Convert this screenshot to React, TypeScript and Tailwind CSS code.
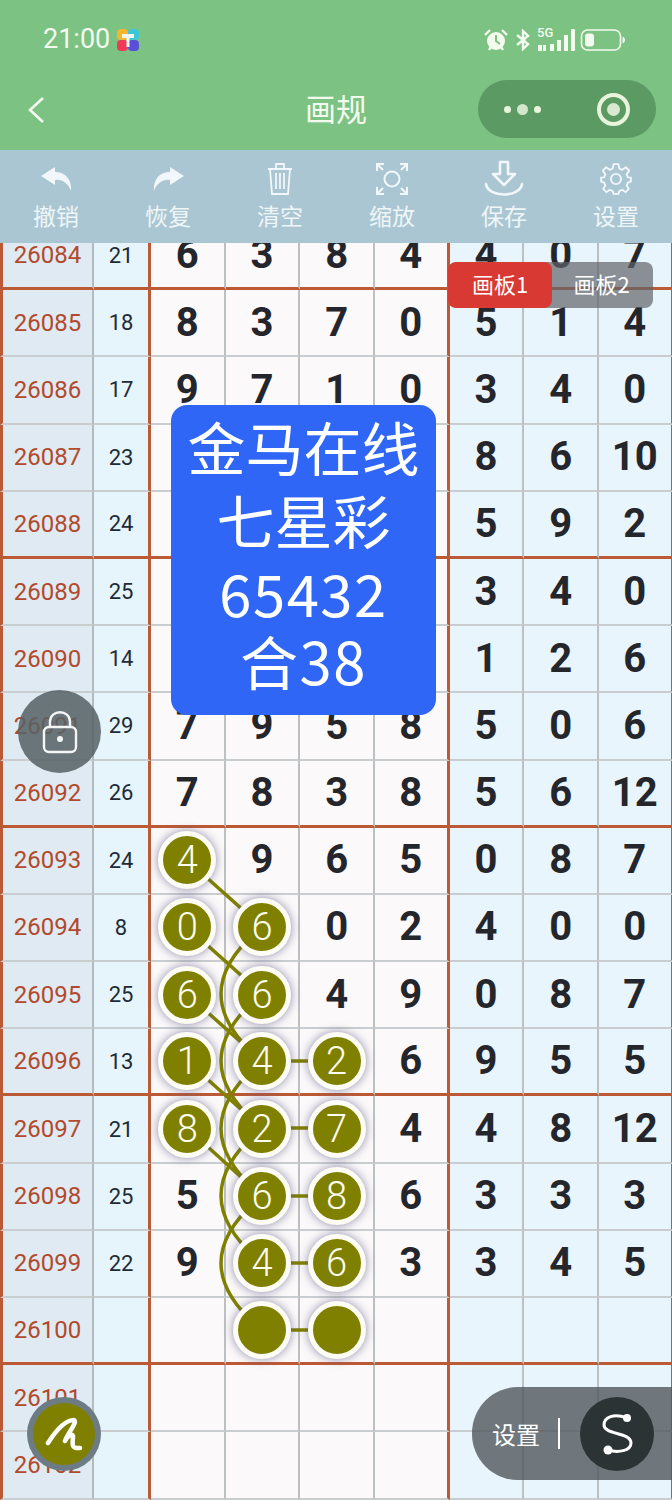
import React from 'react';

type Cell = number | string | null;
type Row = { id: number; sum: number | null; nums: Cell[]; lit?: number[] };

const rows: Row[] = [
  { id: 26084, sum: 21, nums: [6, 3, 8, 4, 4, 0, 7] },
  { id: 26085, sum: 18, nums: [8, 3, 7, 0, 5, 1, 4] },
  { id: 26086, sum: 17, nums: [9, 7, 1, 0, 3, 4, 0] },
  { id: 26087, sum: 23, nums: [null, null, null, null, 8, 6, 10] },
  { id: 26088, sum: 24, nums: [null, null, null, null, 5, 9, 2] },
  { id: 26089, sum: 25, nums: [null, null, null, null, 3, 4, 0] },
  { id: 26090, sum: 14, nums: [null, null, null, null, 1, 2, 6] },
  { id: 26091, sum: 29, nums: [7, 9, 5, 8, 5, 0, 6] },
  { id: 26092, sum: 26, nums: [7, 8, 3, 8, 5, 6, 12] },
  { id: 26093, sum: 24, nums: [4, 9, 6, 5, 0, 8, 7], lit: [0] },
  { id: 26094, sum: 8, nums: [0, 6, 0, 2, 4, 0, 0], lit: [0, 1] },
  { id: 26095, sum: 25, nums: [6, 6, 4, 9, 0, 8, 7], lit: [0, 1] },
  { id: 26096, sum: 13, nums: [1, 4, 2, 6, 9, 5, 5], lit: [0, 1, 2] },
  { id: 26097, sum: 21, nums: [8, 2, 7, 4, 4, 8, 12], lit: [0, 1, 2] },
  { id: 26098, sum: 25, nums: [5, 6, 8, 6, 3, 3, 3], lit: [1, 2] },
  { id: 26099, sum: 22, nums: [9, 4, 6, 3, 3, 4, 5], lit: [1, 2] },
  { id: 26100, sum: null, nums: [null, null, null, null, null, null, null], lit: [1, 2] },
  { id: 26101, sum: null, nums: [null, null, null, null, null, null, null] },
  { id: 26102, sum: null, nums: [null, null, null, null, null, null, null] },
];

const tools = ['撤销', '恢复', '清空', '缩放', '保存', '设置'];

const ToolIcon = ({ index }: { index: number }) => {
  const c = '#f1f7fa';
  if (index === 0 || index === 1) {
    return (
      <svg width="33" height="26" viewBox="0 0 33 26" className={index === 1 ? '-scale-x-100' : ''}>
        <path d="M15 1 L1 10 L15 19 L15 14 C22 13 28 17 31 25 C32 14 26 6 15 6 Z" fill={c} />
      </svg>
    );
  }
  if (index === 2) {
    return (
      <svg width="30" height="34" viewBox="0 0 30 34" fill="none" stroke={c} strokeWidth="1.8">
        <path d="M3 7 H27 M11 7 V2 H19 V7 M5 7 L7 32 H23 L25 7 M11 11 V27 M15 11 V27 M19 11 V27" />
      </svg>
    );
  }
  if (index === 3) {
    return (
      <svg width="34" height="34" viewBox="0 0 34 34" fill="none" stroke={c} strokeWidth="2">
        <circle cx="17" cy="17" r="7.5" />
        <path d="M2 9 V2 H9 M2 2 L8 8 M25 2 H32 V9 M32 2 L26 8 M2 25 V32 H9 M2 32 L8 26 M25 32 H32 V25 M32 32 L26 26" />
      </svg>
    );
  }
  if (index === 4) {
    return (
      <svg width="40" height="38" viewBox="0 0 40 38" fill="none" stroke={c} strokeWidth="2.6" strokeLinejoin="round">
        <path d="M16 2 H24 V14 H31 L20 25 L9 14 H16 Z" />
        <path d="M2 24 C4 38 36 38 38 24" strokeLinecap="round" />
      </svg>
    );
  }
  return (
    <svg width="34" height="34" viewBox="0 0 24 24" fill="none" stroke={c} strokeWidth="1.3" strokeLinejoin="round">
      <circle cx="12" cy="12" r="3.6" />
      <path d="M10.3 1.5 H13.7 L14.3 4.6 L16.4 5.5 L19 3.7 L21.3 6.1 L19.5 8.7 L20.4 10.8 L22.5 11 V13.9 L20.4 14.5 L19.5 16.6 L21 19 L18.8 21.3 L16.4 19.6 L14.3 20.5 L13.7 22.5 H10.3 L9.7 20.5 L7.6 19.6 L5.2 21.3 L3 19 L4.5 16.6 L3.6 14.5 L1.5 13.9 V11 L3.6 10.8 L4.5 8.7 L2.7 6.1 L5 3.7 L7.6 5.5 L9.7 4.6 Z" />
    </svg>
  );
};

const StatusIcons = () => (
  <div className="flex items-center gap-[7px] pr-[46px] text-[#f4fbee]">
    <svg width="26" height="24" viewBox="0 0 26 24" fill="currentColor">
      <circle cx="13" cy="13" r="9" />
      <path d="M2 7 L7 2 M24 7 L19 2 M6 22 L8 19 M20 22 L18 19" stroke="currentColor" strokeWidth="2.4" />
      <path d="M13 7 V13 L17 16" stroke="#7bc283" strokeWidth="2" fill="none" />
    </svg>
    <svg width="14" height="22" viewBox="0 0 14 22" fill="none" stroke="currentColor" strokeWidth="2.4">
      <path d="M1 6 L12 15 L7 20 V2 L12 7 L1 16" />
    </svg>
    <div className="relative h-[24px] w-[42px]">
      <span className="absolute left-0 top-[-2px] font-['Roboto'] text-[13px] font-medium leading-[14px]">5G</span>
      <svg width="42" height="24" viewBox="0 0 42 24" fill="currentColor" className="absolute left-0 top-0">
        <rect x="1" y="17" width="4" height="6" />
        <rect x="6" y="17" width="3" height="6" />
        <rect x="13" y="16" width="4" height="7" />
        <rect x="20" y="12" width="4" height="11" />
        <rect x="27" y="7" width="4" height="16" />
        <rect x="34" y="1" width="4" height="22" />
      </svg>
    </div>
    <svg width="46" height="24" viewBox="0 0 46 24" fill="none" className="-ml-[6px]">
      <rect x="1.5" y="2" width="39" height="20" rx="6" stroke="currentColor" strokeWidth="1.6" />
      <rect x="5" y="5.5" width="9" height="13" rx="3" fill="currentColor" />
      <path d="M43 9 C45 10 45 14 43 15 Z" fill="currentColor" stroke="currentColor" />
    </svg>
  </div>
);

const Ball = ({ value }: { value: Cell }) => (
  <div className="relative z-20 flex h-[58px] w-[58px] items-center justify-center rounded-full border-[5px] border-[#fdfdf6] bg-[#808000] font-['Roboto'] text-[38px] font-light leading-none text-[#fdfdf0] shadow-[0_0_10px_rgba(80,80,125,0.65)]">
    {value}
  </div>
);

const GridRow = ({ row, index }: { row: Row; index: number }) => {
  const bottom =
    index % 4 === 0
      ? 'border-b-[3px] border-b-[#bd5a36]'
      : 'border-b-[2px] border-b-[#c9cdd0]';
  return (
    <div className="grid h-[67.2px] grid-cols-[94px_57px_repeat(7,74.67px)]">
      <div className={`flex items-center justify-center border-l-[3px] border-l-[#bd5a36] border-r-[2px] border-r-[#b4babd] bg-[#dfeaf2] font-['Roboto'] text-[24px] text-[#b2492c] ${bottom}`}>
        {row.id}
      </div>
      <div className={`flex items-center justify-center border-r-[3px] border-r-[#bd5a36] bg-[#e6f4fc] font-['Roboto'] text-[22px] text-[#1e2b35] ${bottom}`}>
        {row.sum}
      </div>
      {row.nums.map((n, i) => {
        const isLit = row.lit?.includes(i);
        const edge =
          i === 3 || i === 6
            ? 'border-r-[3px] border-r-[#bd5a36]'
            : 'border-r-[2px] border-r-[#bcc0c3]';
        return (
          <div
            key={i}
            className={`flex items-center justify-center font-['Roboto'] text-[40px] font-bold text-[#24262b] ${edge} ${bottom} ${i < 4 ? 'bg-[#fcf9fa]' : 'bg-[#e9f5fc]'}`}
          >
            {isLit ? <Ball value={n} /> : n}
          </div>
        );
      })}
    </div>
  );
};

const Links = () => {
  const olive = '#808000';
  const y = [860, 927, 994, 1061, 1128, 1196, 1263, 1330];
  return (
    <svg width="672" height="1500" viewBox="0 0 672 1500" fill="none" stroke={olive} strokeWidth="3.5" className="pointer-events-none absolute left-0 top-0 z-10">
      {[0, 1, 2, 3, 4].map(i => (
        <path key={`d${i}`} d={`M187 ${y[i]} L262 ${y[i + 1]}`} />
      ))}
      {[1, 2, 3, 4, 5].map(i => (
        <path key={`a${i}`} d={`M262 ${y[i]} Q180 ${(y[i] + y[i + 2]) / 2} 262 ${y[i + 2]}`} />
      ))}
      {[3, 4, 5, 6, 7].map(i => (
        <path key={`h${i}`} d={`M262 ${y[i]} L336 ${y[i]}`} />
      ))}
    </svg>
  );
};

export default function App() {
  return (
    <div className="relative h-[1500px] w-[672px] overflow-hidden bg-white font-['Noto_Sans_CJK_SC',sans-serif]">
      {/* status + nav */}
      <header className="h-[150px] bg-[#7bc283]">
        <div className="flex h-[78px] items-center justify-between pl-[43px] pt-[1px]">
          <div className="flex items-center gap-[7px]">
            <span className="font-['Roboto'] text-[27px] leading-none text-[#f4fbee]">21:00</span>
            <svg width="22" height="22" viewBox="0 0 22 22">
              <rect x="0" y="0" width="11" height="11" rx="4" fill="#f5b52e" />
              <rect x="11" y="0" width="11" height="11" rx="4" fill="#3cc7d8" />
              <rect x="0" y="11" width="11" height="11" rx="4" fill="#ee3a55" />
              <rect x="11" y="11" width="11" height="11" rx="4" fill="#5a4fd8" />
              <rect x="5" y="5" width="12" height="4" fill="#f4f4ee" />
              <rect x="9.5" y="9" width="3" height="9" fill="#f4f4ee" />
            </svg>
          </div>
          <StatusIcons />
        </div>
        <div className="relative flex h-[62px] items-center justify-center">
          <svg width="20" height="30" viewBox="0 0 20 30" fill="none" stroke="#f4fbee" strokeWidth="2.6" className="absolute left-[26px] top-[17px]">
            <path d="M17 3 L4 15 L17 27" />
          </svg>
          <span className="-mt-[4px] text-[31px] leading-none text-[#f4fbee]">画规</span>
          <div className="absolute left-[478px] top-[2px] flex h-[58px] w-[178px] items-center rounded-full bg-[#5c9a64] pl-[26px]">
            <span className="h-[7px] w-[7px] rounded-full bg-[#e8f5dc]" />
            <span className="ml-[6px] h-[11px] w-[11px] rounded-full bg-[#d4e6c9]" />
            <span className="ml-[6px] h-[7px] w-[7px] rounded-full bg-[#e8f5dc]" />
            <span className="ml-[56px] flex h-[33px] w-[33px] items-center justify-center rounded-full border-[4px] border-[#e8f5dc]">
              <span className="h-[13px] w-[13px] rounded-full bg-[#d9e9cf]" />
            </span>
          </div>
        </div>
      </header>

      {/* toolbar */}
      <nav className="grid h-[93px] grid-cols-6 bg-[#abc6d3]">
        {tools.map((t, i) => (
          <div key={t} className="flex flex-col items-center">
            <div className="mt-[6px] flex h-[46px] items-center">
              <ToolIcon index={i} />
            </div>
            <span className="text-[23px] leading-[26px] text-[#eef6f8]">{t}</span>
          </div>
        ))}
      </nav>

      {/* chart */}
      <main className="h-[1257px] overflow-hidden">
        <div className="-mt-[20px]">
          {rows.map((r, i) => (
            <GridRow key={r.id} row={r} index={i} />
          ))}
        </div>
      </main>
      <Links />

      {/* board tabs */}
      <div className="absolute left-[448px] top-[262px] z-30 flex">
        <div className="z-10 flex h-[46px] w-[104px] items-center justify-center rounded-[8px] bg-[#d83a33] pb-[3px] text-[22px] text-white">画板1</div>
        <div className="-ml-[8px] flex h-[46px] w-[109px] items-center justify-center rounded-r-[8px] bg-[#5f6468]/70 pb-[3px] pl-[6px] text-[22px] text-white">画板2</div>
      </div>

      {/* notice */}
      <div className="absolute left-[171px] top-[405px] z-30 flex h-[310px] w-[265px] flex-col items-center rounded-[16px] bg-[#2f66f5] pt-[5px] text-[58px] leading-[73px] text-white">
        <span>金马在线</span>
        <span>七星彩</span>
        <span className="tracking-[1.5px]">65432</span>
        <span className="-mt-[5px] tracking-[1.5px]">合38</span>
      </div>

      {/* lock */}
      <div className="absolute left-[18px] top-[690px] z-30 flex h-[83px] w-[83px] items-center justify-center rounded-full bg-[#566065]/85">
        <svg width="36" height="44" viewBox="0 0 36 44" fill="none" stroke="#f4f6f6" strokeWidth="2.4">
          <rect x="2" y="17" width="32" height="25" rx="5" />
          <path d="M8 17 V12 C8 -1 28 -1 28 12 V17" />
          <circle cx="18" cy="29" r="3" fill="#f4f6f6" stroke="none" />
        </svg>
      </div>

      {/* pen */}
      <div className="absolute left-[27px] top-[1397px] z-30 flex h-[74px] w-[74px] items-center justify-center rounded-full bg-[#6d7b85]">
        <div className="flex h-[62px] w-[62px] items-center justify-center rounded-full bg-[#808000]">
          <svg width="38" height="36" viewBox="0 0 38 36" fill="none" stroke="#fff" strokeWidth="4.5" strokeLinecap="round" strokeLinejoin="round">
            <path d="M3 27 C10 16 20 4 29 4 C33 6 22 18 20 25 C23 20 27 17 28 20 C28 26 26 31 31 32 L35 32" />
          </svg>
        </div>
      </div>

      {/* bottom settings pill */}
      <div className="absolute left-[472px] top-[1387px] z-30 flex h-[93px] w-[200px] items-center rounded-l-[46px] bg-[#50585c]/80 pl-[20px]">
        <span className="text-[24px] leading-none text-white">设置</span>
        <span className="ml-[18px] h-[31px] w-[2px] bg-white" />
        <div className="ml-[20px] flex h-[74px] w-[74px] items-center justify-center rounded-full bg-[#2b3335]">
          <svg width="34" height="44" viewBox="0 0 34 44" fill="none" stroke="#fff" strokeWidth="3">
            <path d="M27 6 C14 1 4 5 4 13 C4 23 31 20 31 31 C31 39 18 41 8 38" />
            <circle cx="27" cy="6" r="4" fill="#fff" stroke="none" />
            <circle cx="8" cy="38" r="4.5" fill="#fff" stroke="none" />
          </svg>
        </div>
      </div>
    </div>
  );
}
